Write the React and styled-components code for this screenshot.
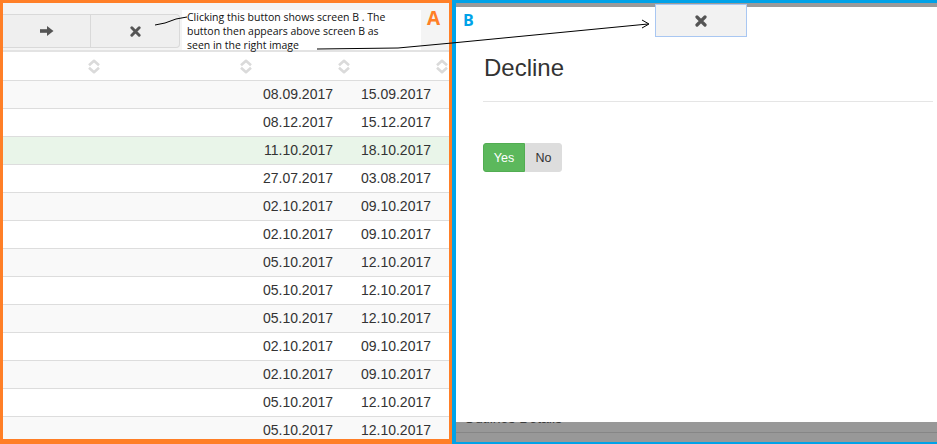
import React from "react";
import styled, { createGlobalStyle } from "styled-components";

const Global = createGlobalStyle`
  html, body { margin: 0; padding: 0; background: #fff; overflow: hidden; }
  body { font-family: "Liberation Sans", Arial, sans-serif; color: #333; }
  * { box-sizing: border-box; }
`;

const Stage = styled.div`
  position: relative;
  width: 937px;
  height: 444px;
  display: flex;
  overflow: hidden;
`;

/* ---------- Screen A ---------- */
const PanelA = styled.section`
  width: 452px;
  height: 444px;
  flex: none;
  border: 3px solid #ff7f27;
  border-bottom-width: 5px;
  display: flex;
  flex-direction: column;
  background: #fff;
  overflow: hidden;
`;

const Toolbar = styled.div`
  display: flex;
  align-items: flex-start;
  background: #f4f4f4;
  padding: 11px 0 2px;
  border-bottom: 2px solid #e3e3e3;
`;

const ButtonGroup = styled.div`
  display: flex;
  height: 34px;
  background: #efefef;
  border: 1px solid #d9d9d9;
  border-left: none;
  border-radius: 0 4px 4px 0;
`;

const ToolButton = styled.div`
  width: ${(p) => p.$w}px;
  display: flex;
  align-items: center;
  justify-content: center;
  border-left: ${(p) => (p.$divided ? "1px solid #d9d9d9" : "none")};
  color: #555;
`;

const Table = styled.div`
  display: flex;
  flex-direction: column;
`;

const HeadRow = styled.div`
  display: grid;
  grid-template-columns: 98px 152px 98px 98px;
  height: 28px;
`;

const HeadCell = styled.div`
  display: flex;
  align-items: center;
  justify-content: flex-end;
  padding-right: ${(p) => p.$pr}px;
`;

const Row = styled.div`
  display: grid;
  grid-template-columns: 98px 152px 98px 98px;
  height: 28px;
  border-top: 1px solid #dddddd;
  background: ${(p) =>
    p.$tone === "green" ? "#e9f5e9" : p.$tone === "gray" ? "#f9f9f9" : "#ffffff"};
`;

const Cell = styled.div`
  font-size: 14px;
  line-height: 27px;
  color: #333;
  text-align: right;
  padding-right: 18px;
  white-space: nowrap;
`;

/* ---------- Screen B ---------- */
const PanelB = styled.section`
  flex: 1;
  height: 444px;
  border-left: 4px solid #00a2e8;
  border-top: 3px solid #00a2e8;
  border-bottom: 2px solid #00a2e8;
  display: flex;
  flex-direction: column;
  background: #fff;
  overflow: hidden;
`;

const TopStrip = styled.div`
  height: 4px;
  flex: none;
  background: #9a9a9a;
`;

const ModalBody = styled.div`
  flex: 1;
  padding: 48px 4px 0 27px;
  display: flex;
  flex-direction: column;
`;

const Title = styled.h4`
  margin: 0;
  padding-left: 1px;
  height: 26px;
  font-size: 24px;
  line-height: 26.4px;
  font-weight: 400;
  color: #333;
`;

const Divider = styled.div`
  margin-top: 20px;
  border-top: 1px solid #e5e5e5;
`;

const Actions = styled.div`
  display: flex;
  margin-top: 41px;
`;

const ChoiceButton = styled.div`
  width: ${(p) => p.$w}px;
  height: 29px;
  display: flex;
  align-items: center;
  justify-content: center;
  font-size: 12.5px;
  background: ${(p) => (p.$primary ? "#5cb85c" : "#dddddd")};
  color: ${(p) => (p.$primary ? "#ffffff" : "#333333")};
  border: 1px solid ${(p) => (p.$primary ? "#52ad52" : "#dddddd")};
  border-radius: ${(p) => (p.$primary ? "3px 0 0 3px" : "0 3px 3px 0")};
`;

const Footer = styled.div`
  height: 20px;
  flex: none;
  background: #989898;
  display: flex;
  flex-direction: column;
`;

const FooterRow = styled.div`
  height: 11px;
  border-bottom: 1px solid #868686;
  overflow: hidden;
  padding-left: 8px;
`;

const FooterText = styled.div`
  margin-top: -12px;
  font-size: 14px;
  line-height: 16px;
  color: #3a3a3a;
`;

/* ---------- annotation overlays ---------- */
const Note = styled.div`
  position: absolute;
  left: 182px;
  top: 10px;
  width: 239px;
  height: 40px;
  background: #fff;
  padding-left: 5px;
  font-family: "Open Sans", "DejaVu Sans", sans-serif;
  font-size: 10.5px;
  line-height: 14px;
  color: #111;
  white-space: nowrap;
`;

const Label = styled.div`
  position: absolute;
  left: ${(p) => p.$x}px;
  top: ${(p) => p.$y}px;
  font-family: "Open Sans", "Liberation Sans", sans-serif;
  font-weight: 700;
  font-size: ${(p) => p.$size}px;
  line-height: 1;
  color: ${(p) => p.$color};
`;

const FloatingClose = styled.div`
  position: absolute;
  left: 655px;
  top: 4px;
  width: 92px;
  height: 33px;
  background: #f2f2f2;
  border: 1px solid #a9c7f2;
  display: flex;
  align-items: center;
  justify-content: center;
`;

const Overlay = styled.svg`
  position: absolute;
  left: 0;
  top: 0;
  pointer-events: none;
`;

const SortIcon = () => (
  <svg width="14" height="15" viewBox="0 0 14 15">
    <path d="M2 6.2 L7 1.8 L12 6.2" fill="none" stroke="#dadada" strokeWidth="2.6" strokeLinejoin="round" />
    <path d="M2 8.8 L7 13.2 L12 8.8" fill="none" stroke="#dadada" strokeWidth="2.6" strokeLinejoin="round" />
  </svg>
);

const ArrowIcon = () => (
  <svg width="14" height="10" viewBox="0 0 14 10">
    <rect x="0" y="3.2" width="8" height="3.6" fill="#555" />
    <path d="M7 0 L13.5 5 L7 10 Z" fill="#555" />
  </svg>
);

const TimesIcon = ({ size }) => (
  <svg width={size} height={size} viewBox="0 0 12 12">
    <path d="M2 2 L10 10 M10 2 L2 10" stroke="#555" strokeWidth="3.2" strokeLinecap="round" />
  </svg>
);

const rows = [
  ["08.09.2017", "15.09.2017"],
  ["08.12.2017", "15.12.2017"],
  ["11.10.2017", "18.10.2017"],
  ["27.07.2017", "03.08.2017"],
  ["02.10.2017", "09.10.2017"],
  ["02.10.2017", "09.10.2017"],
  ["05.10.2017", "12.10.2017"],
  ["05.10.2017", "12.10.2017"],
  ["05.10.2017", "12.10.2017"],
  ["02.10.2017", "09.10.2017"],
  ["02.10.2017", "09.10.2017"],
  ["05.10.2017", "12.10.2017"],
  ["05.10.2017", "12.10.2017"],
];

export default function App() {
  return (
    <Stage>
      <Global />
      <PanelA>
        <Toolbar>
          <ButtonGroup>
            <ToolButton $w={87}>
              <ArrowIcon />
            </ToolButton>
            <ToolButton $w={89} $divided>
              <TimesIcon size={11} />
            </ToolButton>
          </ButtonGroup>
        </Toolbar>
        <Table>
          <HeadRow>
            <HeadCell $pr={0}><SortIcon /></HeadCell>
            <HeadCell $pr={0}><SortIcon /></HeadCell>
            <HeadCell $pr={-2}><SortIcon /></HeadCell>
            <HeadCell $pr={0}><SortIcon /></HeadCell>
          </HeadRow>
          {rows.map((r, i) => (
            <Row key={i} $tone={i === 2 ? "green" : i % 2 === 0 ? "gray" : "white"}>
              <Cell />
              <Cell />
              <Cell>{r[0]}</Cell>
              <Cell>{r[1]}</Cell>
            </Row>
          ))}
        </Table>
      </PanelA>

      <PanelB>
        <TopStrip />
        <ModalBody>
          <Title>Decline</Title>
          <Divider />
          <Actions>
            <ChoiceButton $primary $w={42}>Yes</ChoiceButton>
            <ChoiceButton $w={37}>No</ChoiceButton>
          </Actions>
        </ModalBody>
        <Footer>
          <FooterRow>
            <FooterText>Outlines Details</FooterText>
          </FooterRow>
        </Footer>
      </PanelB>

      <Note>
        Clicking this button shows screen B . The
        <br />
        button then appears above screen B as
        <br />
        seen in the right image
      </Note>
      <Label $x={427} $y={9} $size={19} $color="#ff7f27">A</Label>
      <Label $x={463} $y={12} $size={16} $color="#00a2e8">B</Label>
      <FloatingClose>
        <TimesIcon size={12} />
      </FloatingClose>
      <Overlay width="937" height="444" viewBox="0 0 937 444">
        <path d="M155 25 L165 23 L176 19 L187 17" fill="none" stroke="#000" strokeWidth="1" />
        <path d="M317 49 L398 48 L452 43 L648 24" fill="none" stroke="#000" strokeWidth="1" />
        <path d="M642 20 L649 24 L642 28" fill="none" stroke="#000" strokeWidth="1" />
      </Overlay>
    </Stage>
  );
}
